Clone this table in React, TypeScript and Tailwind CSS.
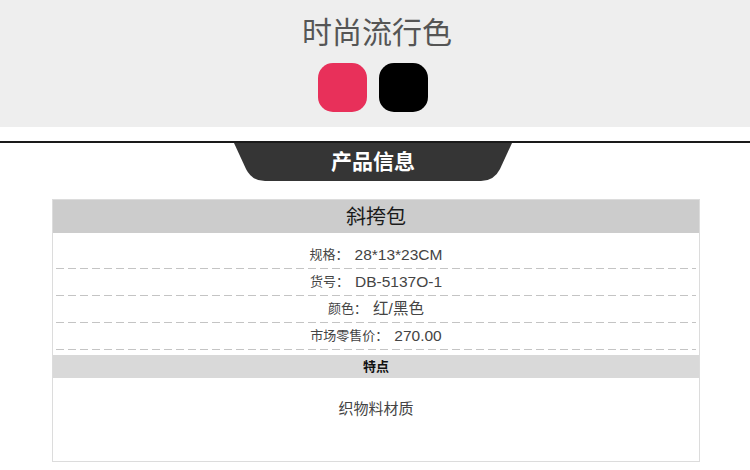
const font = { fontFamily: '"Liberation Sans", "Noto Sans CJK SC", sans-serif' };

const specs = [
  { label: '规格：', value: '28*13*23CM' },
  { label: '货号：', value: 'DB-5137O-1' },
  { label: '颜色：', value: '红/黑色' },
  { label: '市场零售价：', value: '270.00' },
];

const Tab = ({ title }: { title: string }) => (
  <div className="flex justify-center">
    <div className="relative w-[278px] h-[38px] ml-[-4px]">
      <svg width="278" height="38" viewBox="0 0 278 38" className="block">
        <path d="M0 0 H278 L266 26 Q260 38 247 38 H31 Q18 38 12 26 Z" fill="#353535" />
      </svg>
      <div className="absolute inset-0 flex items-center justify-center text-white text-[21px] font-bold pb-[1px]">
        {title}
      </div>
    </div>
  </div>
);

export default function App() {
  return (
    <div className="w-[750px] h-[470px] bg-white overflow-hidden" style={font}>
      {/* colours */}
      <section className="h-[127px] bg-[#eeeeee] flex flex-col items-center">
        <h2 className="mt-[18px] ml-[4px] text-[30px] leading-none text-[#555]">时尚流行色</h2>
        <div className="flex gap-[12px] mt-[15px] ml-[-5px]">
          <div className="w-[49px] h-[49px] rounded-[15px] bg-[#e8305a]" />
          <div className="w-[49px] h-[49px] rounded-[15px] bg-black" />
        </div>
      </section>

      <div className="h-[14px]" />
      <div className="h-[2px] bg-[#1a1a1a]" />
      <Tab title="产品信息" />

      {/* product table */}
      <div className="mt-[18px] ml-[52px] w-[648px] h-[263px] border border-[#dcdcdc] flex flex-col">
        <div className="h-[33px] bg-[#cccccc] flex items-center justify-center text-[20px] text-[#1a1a1a]">
          斜挎包
        </div>
        <div className="pt-[9px] px-[3px]">
          {specs.map((s, i) => (
            <div key={i}>
              <div className="h-[26px] flex items-center justify-center text-[#444]">
                <span className="text-[13px]">{s.label}</span>
                <span className="text-[15.5px] ml-[6px]">{s.value}</span>
              </div>
              <div className="h-px bg-[linear-gradient(to_right,#c4c4c4_8px,transparent_8px)] bg-[length:12px_1px]" />
            </div>
          ))}
        </div>
        <div className="mt-[5px] h-[23px] bg-[#d9d9d9] flex items-center justify-center text-[13px] font-bold text-[#111]">
          特点
        </div>
        <div className="flex-1 flex justify-center pt-[20px] text-[15px] text-[#444]">
          织物料材质
        </div>
      </div>
    </div>
  );
}
